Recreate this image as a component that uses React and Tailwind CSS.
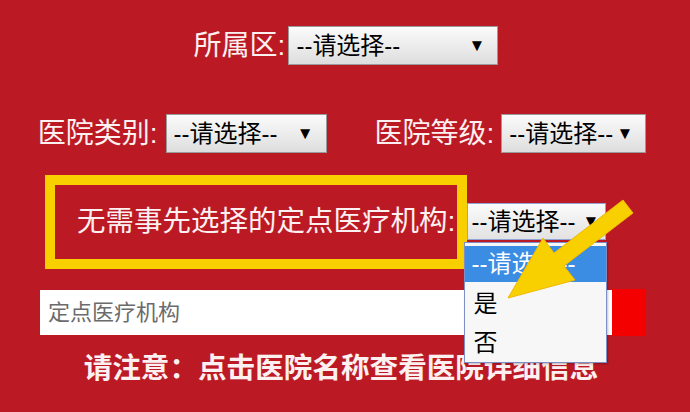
import React from 'react';

const font = "font-['Liberation_Sans','Noto_Sans_CJK_SC',sans-serif]";

function FakeSelect({ width }) {
  return (
    <div
      className={`flex h-[39px] items-center justify-between border border-[#9a9a9a] bg-gradient-to-b from-[#fbfbfb] to-[#dedede] pl-[7px] pr-[12px] text-[24px] leading-none text-black ${width}`}
    >
      <span>--请选择--</span>
      <span className="text-[17px]">▼</span>
    </div>
  );
}

export default function App() {
  return (
    <div className={`relative h-[412px] w-[690px] overflow-hidden bg-[#bb1a25] ${font}`}>
      <div className="flex flex-col items-center pt-[26px]">
        {/* 所属区 */}
        <div className="flex items-center gap-[3px] pl-[2px]">
          <span className="text-[28px] leading-none text-[#fdf0f1]">所属区:</span>
          <FakeSelect width="w-[210px]" />
        </div>

        {/* 医院类别 / 医院等级 */}
        <div className="mt-[49px] flex items-center pr-[6px]">
          <span className="text-[28px] leading-none text-[#fdf0f1]">医院类别:</span>
          <div className="ml-[8px]">
            <FakeSelect width="w-[161px]" />
          </div>
          <span className="ml-[48px] text-[28px] leading-none text-[#fdf0f1]">医院等级:</span>
          <div className="ml-[7px]">
            <FakeSelect width="w-[145px]" />
          </div>
        </div>

        {/* 无需事先选择的定点医疗机构 */}
        <div className="mt-[50px] flex w-full items-center pl-[77px]">
          <span className="text-[28.5px] leading-none text-[#fdf0f1]">无需事先选择的定点医疗机构:</span>
          <div className="relative ml-[12px]">
            <div className="flex h-[37px] w-[139px] items-center justify-between border border-[#8fa3d6] bg-gradient-to-b from-[#fbfbfb] to-[#e2e2e2] pl-[3px] pr-[6px] text-[24px] leading-none text-black">
              <span>--请选择--</span>
              <span className="text-[17px]">▼</span>
            </div>
            <ul className="absolute left-[-3px] top-[39px] z-10 w-[143px] border border-[#7d8fc4] bg-[#f7f7f7] pb-[1px] pt-[3px] text-[24px] leading-none text-black shadow-[1px_1px_2px_rgba(0,0,0,0.25)]">
              <li className="flex h-[36px] items-center bg-[#3a8de3] pl-[6px] text-white">--请选择--</li>
              <li className="flex h-[42px] items-center pl-[8px] pt-[2px]">是</li>
              <li className="flex h-[37px] items-center pl-[8px]">否</li>
            </ul>
          </div>
        </div>

        {/* 定点医疗机构 search */}
        <div className="mt-[49px] flex w-full items-center pl-[40px]">
          <div className="flex h-[45px] w-[572px] items-center bg-white pl-[8px] text-[22px] leading-none text-[#6b6b6b]">
            定点医疗机构
          </div>
          <div className="h-[47px] w-[33px] bg-[#f50000]" />
        </div>

        {/* 请注意 */}
        <p className="mt-[13px] pr-[8px] text-[28.6px] font-bold leading-[38px] text-[#fdf0f1]">请注意：点击医院名称查看医院详细信息</p>
      </div>

      {/* annotation: yellow frame */}
      <div className="pointer-events-none absolute left-[45px] top-[175px] h-[94px] w-[422px] border-[10px] border-[#f8d000]" />

      {/* annotation: yellow arrow */}
      <svg className="pointer-events-none absolute inset-0 z-20" width="690" height="412" viewBox="0 0 690 412">
        <polygon
          points="623,200 554,253 543,238 508,298 575,280 564,266 633,213"
          fill="#f8d000"
          stroke="#f0b800"
          strokeWidth="1"
          strokeLinejoin="round"
        />
      </svg>
    </div>
  );
}
